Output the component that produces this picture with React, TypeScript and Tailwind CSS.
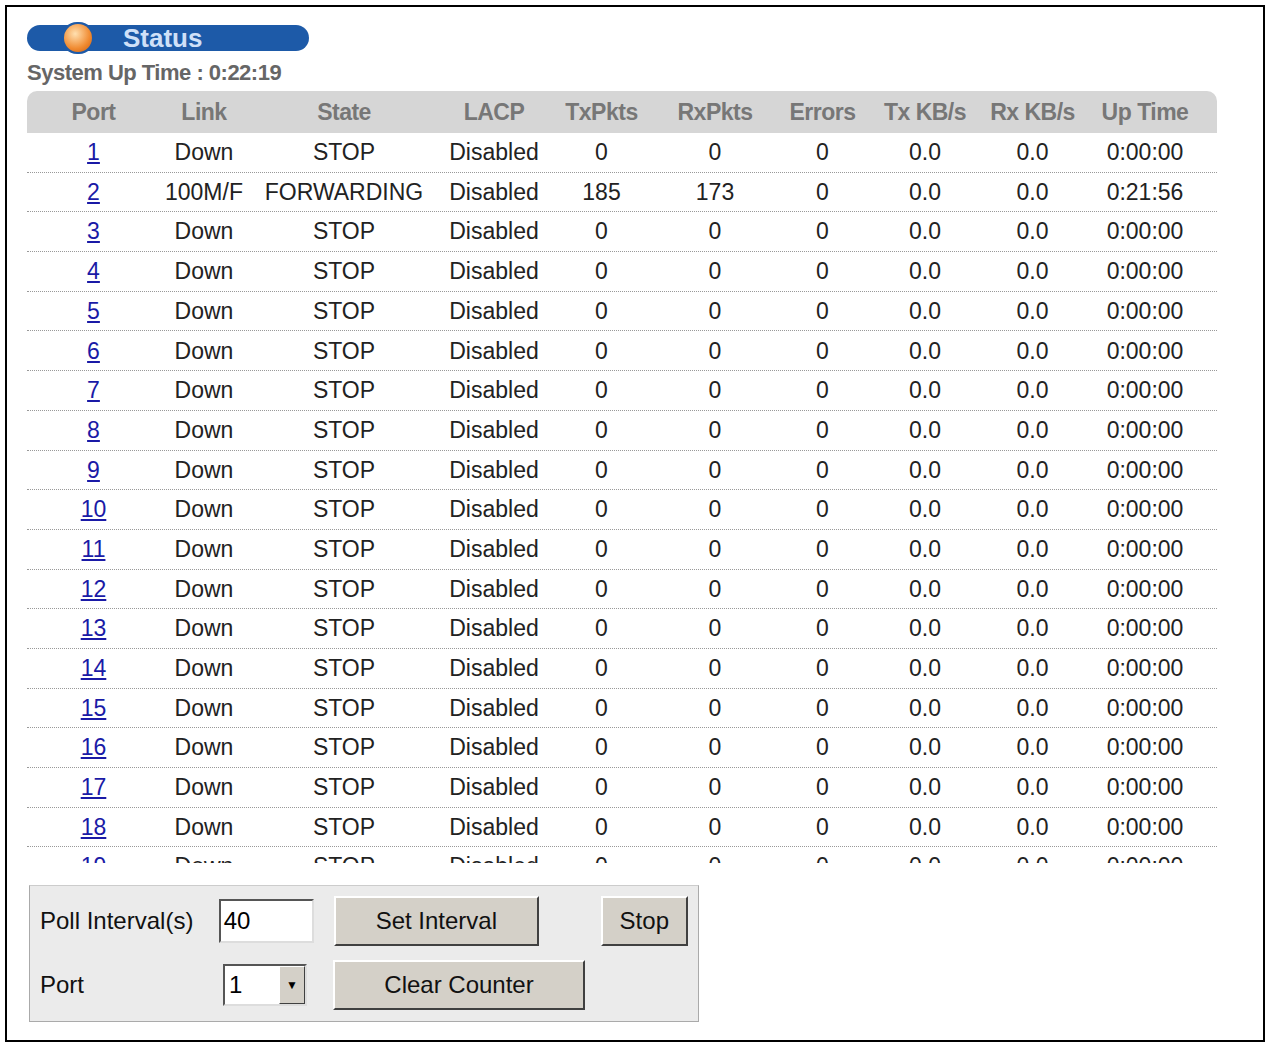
import React from "react";

const cols = [
  { h: "Port", w: 133 },
  { h: "Link", w: 88 },
  { h: "State", w: 192 },
  { h: "LACP", w: 108 },
  { h: "TxPkts", w: 107 },
  { h: "RxPkts", w: 120 },
  { h: "Errors", w: 95 },
  { h: "Tx KB/s", w: 110 },
  { h: "Rx KB/s", w: 105 },
  { h: "Up Time", w: 120 },
];

const rows = Array.from({ length: 19 }, (_, i) =>
  i === 1
    ? ["2", "100M/F", "FORWARDING", "Disabled", "185", "173", "0", "0.0", "0.0", "0:21:56"]
    : [String(i + 1), "Down", "STOP", "Disabled", "0", "0", "0", "0.0", "0.0", "0:00:00"]
);

const btn =
  "bg-[#d4d0c8] border-2 border-t-white border-l-white border-r-[#404040] border-b-[#404040] text-[24px] text-[#111] flex items-center justify-center";

export default function App() {
  return (
    <div className="w-[1270px] h-[1048px] bg-white p-[5px]" style={{ fontFamily: '"Liberation Sans", Arial, sans-serif' }}>
      <div className="w-[1260px] h-[1037px] border-2 border-black pl-[20px] pt-[18px]">
        {/* title bar */}
        <div className="relative w-[282px] h-[26px] rounded-full bg-[#1d5aa8] flex items-center">
          <div className="absolute left-[34px] top-[-3px] w-[34px] h-[32px] rounded-full bg-[#1d5aa8] flex items-center justify-center">
            <div className="w-[28px] h-[28px] rounded-full bg-[radial-gradient(circle_at_40%_35%,#ffe0b0,#f08a30_60%,#c85a10)]" />
          </div>
          <span className="ml-[96px] text-[26px] font-bold text-[#cfe0f8] leading-none">Status</span>
        </div>
        <div className="mt-[8px] text-[22px] font-bold text-[#666] tracking-[-0.5px] leading-[28px]">System Up Time : 0:22:19</div>
        {/* table */}
        <div className="mt-[4px] w-[1190px] h-[772px] overflow-hidden">
          <div className="flex h-[42px] bg-[#d6d6d6] rounded-t-[10px] items-center">
            {cols.map((c) => (
              <div key={c.h} style={{ width: c.w }} className="text-center text-[23px] font-bold text-[#777] tracking-[-0.5px]">
                {c.h}
              </div>
            ))}
          </div>
          {rows.map((r, i) => (
            <div key={i} className="flex h-[39.7px] items-center border-b border-dotted border-[#999] text-[23px] text-[#222]">
              {r.map((v, j) => (
                <div key={j} style={{ width: cols[j].w }} className="text-center">
                  {j === 0 ? <span className="text-[#1a1aa6] underline">{v}</span> : v}
                </div>
              ))}
            </div>
          ))}
        </div>
        {/* control panel */}
        <div className="mt-[22px] ml-[2px] w-[670px] h-[137px] bg-[#ebebeb] border border-[#aaa] border-t-[#ccc] px-[10px] pt-[10px]">
          <div className="flex items-center h-[50px]">
            <span className="text-[24px] text-[#111] w-[180px]">Poll Interval(s)</span>
            <div className="w-[96px] h-[44px] bg-white border-2 border-t-[#555] border-l-[#555] border-r-[#ddd] border-b-[#ddd] text-[24px] flex items-center pl-[3px]">40</div>
            <div className={`${btn} ml-[20px] w-[206px] h-[50px]`}>Set Interval</div>
            <div className={`${btn} ml-[62px] w-[88px] h-[50px]`}>Stop</div>
          </div>
          <div className="flex items-center h-[50px] mt-[14px]">
            <span className="text-[24px] text-[#111] w-[183px]">Port</span>
            <div className="w-[84px] h-[42px] bg-white border-2 border-t-[#555] border-l-[#555] border-r-[#ddd] border-b-[#ddd] flex items-center">
              <span className="text-[24px] flex-1 pl-[4px]">1</span>
              <div className="w-[26px] h-full bg-[#d4d0c8] border border-t-white border-l-white border-r-[#404040] border-b-[#404040] flex items-center justify-center text-[12px]">▼</div>
            </div>
            <div className={`${btn} ml-[26px] w-[252px] h-[50px]`}>Clear Counter</div>
          </div>
        </div>
      </div>
    </div>
  );
}
